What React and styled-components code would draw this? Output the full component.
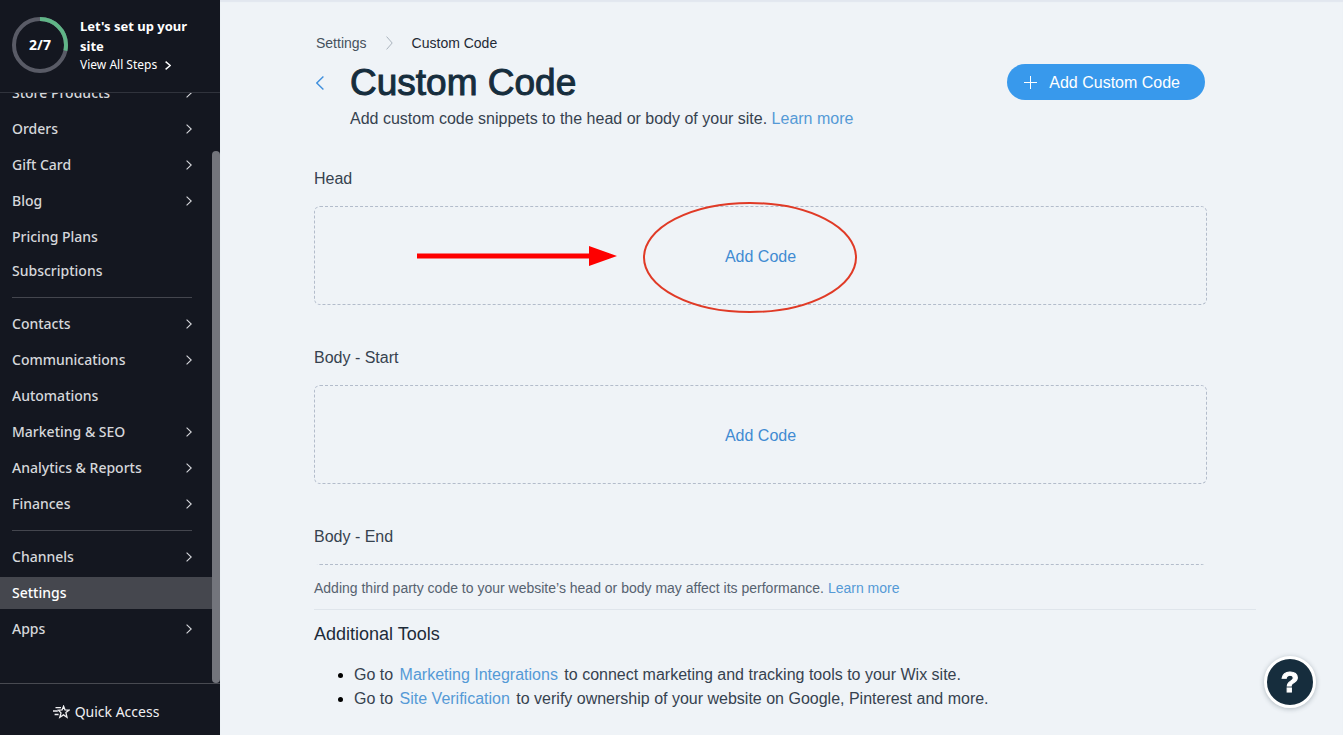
import React from "react";
import styled, { createGlobalStyle, css } from "styled-components";

const sans = `"Liberation Sans", Arial, Helvetica, sans-serif`;
const navFont = `"Noto Sans", "Open Sans", sans-serif`;

const GlobalStyle = createGlobalStyle`
  *, *::before, *::after { box-sizing: border-box; }
  body { margin: 0; background: #eff3f7; color: #36424f; font: 16px/24px ${sans}; }
  h1, h2, p, ul { margin: 0; padding: 0; }
  button { border: 0; padding: 0; background: none; font: inherit; color: inherit; cursor: pointer; }
  a { color: inherit; text-decoration: none; }
`;

const Page = styled.div`
  display: flex;
  min-height: 100vh;
`;

/* ---------- Sidebar ---------- */

const Sidebar = styled.aside`
  position: sticky;
  top: 0;
  display: flex;
  flex-direction: column;
  flex: 0 0 220px;
  height: 100vh;
  background: #141720;
  color: #d6d7db;
  font-family: ${navFont};
`;

const Setup = styled.div`
  display: flex;
  gap: 12px;
  flex: none;
  padding: 16px 12px;
  height: 93px;
  border-bottom: 1px solid #30333c;
  color: #fff;
`;

const Progress = styled.div`
  display: grid;
  flex: none;
  width: 56px;
  height: 57px;
  place-items: center;
  font-size: 14px;
  font-weight: 700;

  > * { grid-area: 1 / 1; }
`;

const SetupText = styled.div`
  font-size: 13px;
  font-weight: 700;
  line-height: 20px;
`;

const StepsLink = styled.a`
  display: flex;
  align-items: center;
  gap: 8px;
  font-size: 12px;
  font-weight: 400;
  line-height: 18px;
`;

const NavArea = styled.div`
  display: flex;
  flex: 1;
  min-height: 0;
  overflow: hidden;
`;

const Nav = styled.nav`
  display: flex;
  flex: 1;
  flex-direction: column;
  justify-content: flex-end;
  padding-bottom: 38px;
`;

const NavItem = styled.a`
  display: flex;
  flex: none;
  align-items: center;
  justify-content: space-between;
  height: 32px;
  margin-top: ${(p) => (p.$tight ? 2 : 4)}px;
  padding: 0 20px 0 12px;
  font-size: 14px;
  font-weight: 500;

  ${(p) => p.$first && css`margin-top: 0;`}
  ${(p) => p.$active && css`background: #45474e; color: #fff;`}
`;

const NavDivider = styled.hr`
  flex: none;
  width: 180px;
  height: 1px;
  margin: 10px 12px;
  border: 0;
  background: #44464e;
`;

const Track = styled.div`
  display: flex;
  flex: 0 0 8px;
  padding-top: 58px;
`;

const Thumb = styled.div`
  flex: 1;
  border-radius: 4px;
  background: #73757c;
`;

const QuickAccess = styled.button`
  display: flex;
  flex: 0 0 52px;
  align-items: center;
  justify-content: center;
  gap: 5px;
  && { border-top: 1px solid #484a51; padding: 4px 8px 0 0; color: #f0f0f2; font-size: 14px; }
`;

/* ---------- Main ---------- */

const Main = styled.main`
  flex: 1;
  min-width: 0;
  padding: 31px 87px 23px 94px;
  box-shadow: inset 0 2px 1px #e2e7ef;
`;

const Column = styled.div`
  margin-right: 49px;
`;

const Crumbs = styled.nav`
  display: flex;
  align-items: center;
  gap: 19px;
  padding-left: 2px;
  font-size: 14px;
  color: #46515d;

  span { color: #1f2a36; }
`;

const Header = styled.header`
  display: flex;
  align-items: flex-start;
  justify-content: space-between;
  padding: 8px 2px 0;
`;

const TitleRow = styled.div`
  display: flex;
  align-items: center;
  gap: 26px;
  height: 40px;
`;

const BackButton = styled.button`
  display: flex;
  && { color: #3f8fdd; }
`;

const Title = styled.h1`
  color: #162d3d;
  font-size: 37px;
  font-weight: 400;
  line-height: 40px;
  -webkit-text-stroke: 1px #162d3d;
`;

const Subtitle = styled.p`
  && { padding: 4px 0 0 34px; }
`;

const Link = styled.a`
  && { color: #559ad6; }
  ${(p) => p.$spaced && css`margin: 0 2px;`}
`;

const PrimaryButton = styled.button`
  display: flex;
  align-items: center;
  gap: 11px;
  height: 36px;
  margin-top: 1px;
  border-radius: 18px;
  && { padding: 2px 25px 0 17px; background: #3899ec; color: #fff; }
`;

const Sections = styled.div`
  display: flex;
  flex-direction: column;
  gap: 41px;
  padding-top: 36px;
`;

const Label = styled.h2`
  && { margin-bottom: 15px; }
  font-size: 16px;
  font-weight: 400;
  line-height: 24px;
`;

const Window = styled.div`
  ${(p) => p.$cut && css`height: 1px; overflow: hidden;`}
`;

const CodeBox = styled.div`
  position: relative;
  display: flex;
  align-items: center;
  justify-content: center;
  height: 99px;
  border: 1px dashed #b3bccb;
  border-radius: 6px;
`;

const AddCode = styled.button`
  && { padding-top: 2px; color: #3f8bd2; }
`;

const Annotation = styled.svg`
  position: absolute;
  top: -5px;
  left: calc(50% - 344px);
  pointer-events: none;
`;

const Note = styled.p`
  && { padding: 11px 0 9px; }
  font-size: 14px;
  color: #566270;
`;

const Tools = styled.section`
  padding-top: 12px;
  border-top: 1px solid #dfe5eb;

  ul { padding-left: 40px; }
  li::marker { color: #000; }
`;

const ToolsTitle = styled.h2`
  && { margin-bottom: 17px; }
  color: #1d2b39;
  font-size: 18px;
  font-weight: 400;
  line-height: 24px;
`;

const HelpButton = styled.button`
  position: fixed;
  right: 27px;
  bottom: 27px;
  width: 52px;
  height: 52px;
  border-radius: 50%;
  box-shadow: 0 1px 5px rgba(22, 45, 61, 0.3);
  && {
    border: 3px solid #fff;
    background: #162d3d;
    color: #fff;
    font: 700 30px/46px ${sans};
    -webkit-text-stroke: 1px #fff;
  }
`;

const Chevron = ({ w = 6, h = 10, flip, color = "currentColor", stroke = 1.1 }) => (
  <svg width={w} height={h} viewBox={`0 0 ${w} ${h}`} fill="none" stroke={color} strokeWidth={stroke} aria-hidden="true">
    <path d={flip ? `M${w - 0.6} .6L.8 ${h / 2}L${w - 0.6} ${h - 0.6}` : `M.6 .6L${w - 0.8} ${h / 2}L.6 ${h - 0.6}`} />
  </svg>
);

const Ring = () => (
  <svg width="56" height="56" viewBox="0 0 56 56" fill="none" strokeWidth="4" aria-hidden="true">
    <circle cx="28" cy="28" r="26" stroke="#595b66" />
    <circle cx="28" cy="28" r="26" stroke="#60b587" pathLength="7" strokeDasharray="2 5" transform="rotate(-90 28 28)" />
  </svg>
);

const ShootingStar = () => (
  <svg width="17" height="14" viewBox="0 0 17 14" fill="none" stroke="currentColor" strokeWidth="1.3" aria-hidden="true">
    <path d="M10.600 1.200l1.400 3.600 4 .3-3.100 2.500 1.100 4.700-3.500-2.400-3.700 2.400 1.200-4.400-2.600-2.700 3.700-.4z" />
    <path d="M2.500 2.600h5.500M0 6h4.800M1.600 9.500h4" />
  </svg>
);

const Plus = () => (
  <svg width="14" height="14" viewBox="0 0 14 14" fill="none" stroke="currentColor" aria-hidden="true">
    <path d="M6.500 0v13M0 6.500h13" />
  </svg>
);

const navGroups = [
  [
    { name: "Store Products", more: true },
    { name: "Orders", more: true },
    { name: "Gift Card", more: true },
    { name: "Blog", more: true },
    { name: "Pricing Plans" },
    { name: "Subscriptions", tight: true },
  ],
  [
    { name: "Contacts", more: true },
    { name: "Communications", more: true },
    { name: "Automations" },
    { name: "Marketing & SEO", more: true },
    { name: "Analytics & Reports", more: true },
    { name: "Finances", more: true },
  ],
  [
    { name: "Channels", more: true },
    { name: "Settings", active: true },
    { name: "Apps", more: true },
  ],
];

const sections = [
  { name: "Head", marked: true },
  { name: "Body - Start" },
  { name: "Body - End", cut: true },
];

export default function App() {
  return (
    <>
      <GlobalStyle />
      <Page>
        <Sidebar>
          <Setup>
            <Progress>
              <Ring />
              <span>2/7</span>
            </Progress>
            <SetupText>
              Let's set up your site
              <StepsLink href="#steps">
                View All Steps <Chevron w={6} h={9} stroke={1.4} />
              </StepsLink>
            </SetupText>
          </Setup>
          <NavArea>
            <Nav>
              {navGroups.map((group, g) => (
                <React.Fragment key={g}>
                  {g > 0 && <NavDivider />}
                  {group.map((item, i) => (
                    <NavItem key={item.name} href="#nav" $first={i === 0} $tight={item.tight} $active={item.active}>
                      {item.name}
                      {item.more && <Chevron />}
                    </NavItem>
                  ))}
                </React.Fragment>
              ))}
            </Nav>
            <Track>
              <Thumb />
            </Track>
          </NavArea>
          <QuickAccess type="button">
            <ShootingStar />
            Quick Access
          </QuickAccess>
        </Sidebar>

        <Main>
          <Column>
            <Crumbs aria-label="Breadcrumb">
              <a href="#settings">Settings</a>
              <Chevron w={7} h={14} color="#a9b2bc" stroke={1} />
              <span>Custom Code</span>
            </Crumbs>
            <Header>
              <div>
                <TitleRow>
                  <BackButton type="button" aria-label="Back">
                    <Chevron w={8} h={14} flip stroke={1.4} />
                  </BackButton>
                  <Title>Custom Code</Title>
                </TitleRow>
                <Subtitle>
                  Add custom code snippets to the head or body of your site. <Link href="#learn">Learn more</Link>
                </Subtitle>
              </div>
              <PrimaryButton type="button">
                <Plus />
                Add Custom Code
              </PrimaryButton>
            </Header>
            <Sections>
              {sections.map((s) => (
                <section key={s.name}>
                  <Label>{s.name}</Label>
                  <Window $cut={s.cut}>
                    <CodeBox>
                      {!s.cut && <AddCode type="button">Add Code</AddCode>}
                      {s.marked && (
                        <Annotation width="442" height="112" viewBox="0 0 442 112" fill="none" aria-hidden="true">
                          <path d="M0 51.500h172V44l28 10-28 10v-7.500H0z" fill="#fe0000" />
                          <ellipse cx="333" cy="55.500" rx="106" ry="54.500" stroke="#e03a26" strokeWidth="2" />
                        </Annotation>
                      )}
                    </CodeBox>
                  </Window>
                </section>
              ))}
            </Sections>
            <Note>
              Adding third party code to your website’s head or body may affect its performance.{" "}
              <Link href="#performance">Learn more</Link>
            </Note>
          </Column>
          <Tools>
            <ToolsTitle>Additional Tools</ToolsTitle>
            <ul>
              <li>
                Go to <Link $spaced href="#integrations">Marketing Integrations</Link> to connect marketing and tracking
                tools to your Wix site.
              </li>
              <li>
                Go to <Link $spaced href="#verification">Site Verification</Link> to verify ownership of your website on
                Google, Pinterest and more.
              </li>
            </ul>
          </Tools>
        </Main>
        <HelpButton type="button" aria-label="Help">?</HelpButton>
      </Page>
    </>
  );
}
